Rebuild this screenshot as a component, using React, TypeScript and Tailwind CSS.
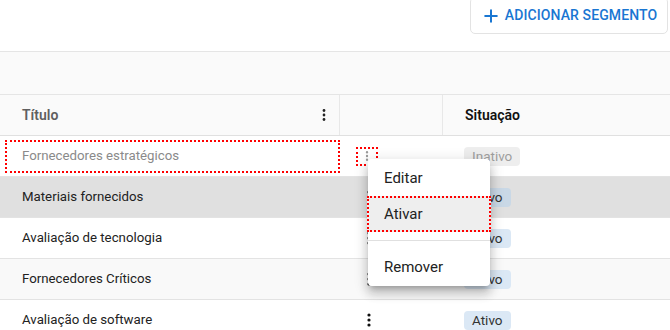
import { Plus } from 'lucide-react';

type Row = { title: string; active: boolean };

const rows: Row[] = [
  { title: 'Fornecedores estratégicos', active: false },
  { title: 'Materiais fornecidos', active: true },
  { title: 'Avaliação de tecnologia', active: true },
  { title: 'Fornecedores Críticos', active: true },
  { title: 'Avaliação de software', active: true },
];

function Kebab({ className = '' }: { className?: string }) {
  return (
    <svg width="4" height="14" viewBox="0 0 4 14" className={className} fill="currentColor">
      <circle cx="2" cy="2" r="1.6" />
      <circle cx="2" cy="7" r="1.6" />
      <circle cx="2" cy="12" r="1.6" />
    </svg>
  );
}

function Badge({ active, hovered }: { active: boolean; hovered?: boolean }) {
  if (!active) {
    return (
      <span className="px-[8px] h-[19px] leading-[19px] rounded-[4px] bg-[#eeeeee] text-[#9e9e9e] text-[13.5px]">
        Inativo
      </span>
    );
  }
  return (
    <span
      className={`px-[8px] h-[19px] leading-[19px] rounded-[4px] text-[#333] text-[13.5px] ${
        hovered ? 'bg-[#c9d8e6]' : 'bg-[#dbe8f5]'
      }`}
    >
      Ativo
    </span>
  );
}

export default function App() {
  return (
    <div className="relative w-[670px] h-[330px] overflow-hidden bg-white font-['Roboto',sans-serif]">
      <div className="h-[51px] flex justify-end items-start pr-[2px]">
        <button className="-mt-[3px] h-[37px] w-[198px] flex items-center justify-center gap-[4px] rounded-[5px] border border-[#e3e3e3] bg-white text-[#1976d2] text-[14px] font-medium tracking-[0.1px]">
          <Plus className="w-[20px] h-[20px]" strokeWidth={2.4} />
          ADICIONAR SEGMENTO
        </button>
      </div>

      <div className="h-[44px] bg-[#fafafa] border-y border-[#e5e5e5]" />

      <div className="grid grid-cols-[340px_103px_1fr] h-[41px] bg-[#fafafa] border-b border-[#e0e0e0] text-[14px] font-semibold">
        <div className="flex items-center justify-between pl-[22px] pr-[13px] border-r border-[#e8e8e8] text-[#5f5f5f]">
          Título
          <Kebab className="text-[#222] scale-90" />
        </div>
        <div className="border-r border-[#e8e8e8]" />
        <div className="flex items-center pl-[22px] text-[#111]">Situação</div>
      </div>

      {rows.map((row, i) => {
        const hovered = i === 1;
        const bg = hovered ? 'bg-[#e0e0e0]' : i === 3 ? 'bg-[#f9f9f9]' : 'bg-white';
        return (
          <div
            key={row.title}
            className={`grid grid-cols-[340px_103px_1fr] h-[41px] border-b border-[#e3e3e3] text-[13.25px] ${bg}`}
          >
            {i === 0 ? (
              <div className="flex items-center pl-[5px]">
                <div className="w-[338px] h-[33px] flex items-center pl-[15px] border-2 border-dotted border-[#f00] text-[#8a8a8a]">
                  {row.title}
                </div>
              </div>
            ) : (
              <div className="flex items-center pl-[22px] text-[#222]">{row.title}</div>
            )}
            <div className="flex items-center pl-[16px]">
              {i === 0 ? (
                <div className="w-[22px] h-[19px] flex items-center justify-center border-2 border-dotted border-[#f00]">
                  <Kebab className="text-[#9a9a9a] scale-75" />
                </div>
              ) : (
                <div className="w-[26px] flex justify-center">
                  <Kebab className="text-[#111]" />
                </div>
              )}
            </div>
            <div className="flex items-center pl-[21px]">
              <Badge active={row.active} hovered={hovered} />
            </div>
          </div>
        );
      })}

      <div className="absolute left-[368px] top-[159px] w-[122px] py-[1px] bg-white rounded-[4px] shadow-[0_5px_5px_-3px_rgba(0,0,0,0.2),0_8px_10px_1px_rgba(0,0,0,0.14),0_3px_14px_2px_rgba(0,0,0,0.12)] text-[15px] text-[#222]">
        <div className="h-[36px] flex items-center px-[16px]">Editar</div>
        <div className="h-[36px] flex items-center px-[15px] bg-[#eeeeee] border-2 border-dotted border-[#f00] -mx-[1px]">
          Ativar
        </div>
        <div className="my-[8px] border-t border-[#e0e0e0]" />
        <div className="h-[36px] flex items-center px-[16px]">Remover</div>
      </div>
    </div>
  );
}
